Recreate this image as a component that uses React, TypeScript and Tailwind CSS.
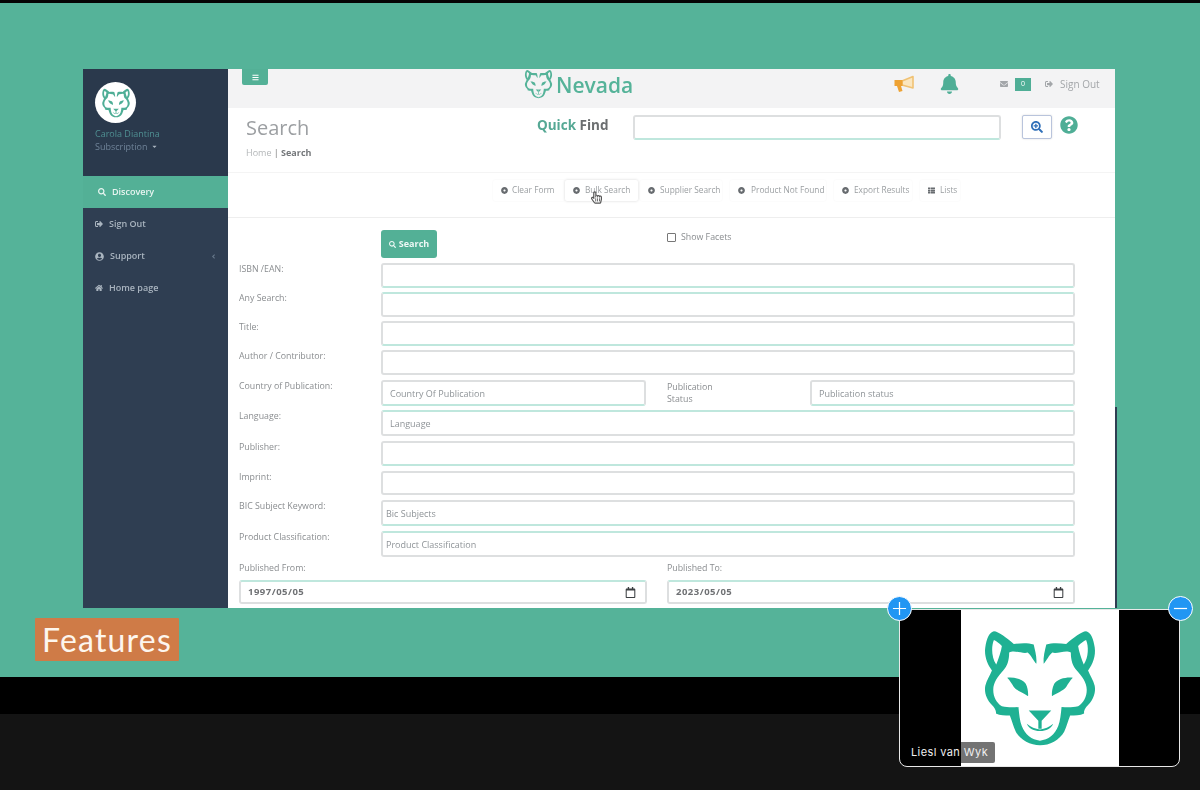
import React from "react";
import { FaBars, FaSearch, FaSignOutAlt, FaUserCircle, FaHome, FaEnvelope, FaBell, FaQuestionCircle, FaSearchPlus, FaThList, FaDotCircle, FaRegHandPointer, FaRegCalendar, FaCaretDown, FaAngleLeft } from "react-icons/fa";

function Wolf({ className }: { className: string }) {
  const half = (
    <>
      <path d="M338 122 C352 122 375 142 398 160 C418 158 440 156 458 162 C462 180 468 200 466 220 C458 212 450 194 440 186 C425 192 400 176 384 186 C384 210 378 228 366 240 C350 258 336 276 336 298 C336 320 346 338 362 348 C380 352 395 352 412 350 C414 372 416 392 422 408 C432 434 452 450 477 452 L477 466 C448 466 418 450 404 425 C396 408 392 390 386 376 C372 376 356 376 344 370 C346 362 340 352 332 344 C316 328 308 306 312 286 C316 270 326 256 332 240 C318 222 308 196 312 170 C316 146 322 126 338 122 Z M338 148 C330 166 330 200 345 222 C352 204 360 182 362 166 C354 158 346 152 338 148 Z" fillRule="evenodd" />
      <path d="M378 262 C400 260 424 266 434 280 C440 292 442 306 441 318 C426 308 408 302 398 290 C392 280 386 270 378 262 Z" />
      <path d="M443 361 L477 361 L477 416 L472 416 L472 392 Z" />
      <path d="M437 401 C450 412 462 416 477 418 L477 423 C458 423 444 416 437 401 Z" />
    </>
  );
  return (
    <svg viewBox="300 112 354 362" className={className} fill="currentColor">
      {half}
      <g transform="translate(954 0) scale(-1 1)">{half}</g>
    </svg>
  );
}

const GT = "border-[#dddfe0] border-b-[#bfe7dd]";
const TG = "border-[#dddfe0] border-t-[#bfe7dd]";
const GG = "border-[#dddfe0]";
const LABEL = "text-[8.8px] text-[#8a8d90]";

function Field({ tone, h, ph, pad }: { tone: string; h: string; ph?: string; pad?: string }) {
  return (
    <input
      readOnly
      placeholder={ph}
      className={`min-w-0 flex-1 ${h} rounded-[3px] border-2 bg-white ${tone} ${pad ?? "px-[7px]"} text-[9px] placeholder:text-[#8f9498] outline-none`}
    />
  );
}

function Row({ label, tone, h, ph, pad, mt }: { label: string; tone: string; h: string; ph?: string; pad?: string; mt: string }) {
  return (
    <div className={`flex ${mt}`}>
      <div className={`w-[142px] shrink-0 leading-[12px] ${LABEL}`}>{label}</div>
      <Field tone={tone} h={h} ph={ph} pad={pad} />
    </div>
  );
}

function Tool({ label, active, w, gap, icon }: { label: string; active?: boolean; w: string; gap: string; icon?: React.ReactNode }) {
  return (
    <div className={`flex h-[21px] ${w} ${gap} items-center whitespace-nowrap rounded-[2px] pb-[1px] pl-[8px] text-[8.3px] text-[#9a9ea1] ${active ? "bg-white shadow-[0_0_3px_rgba(0,0,0,0.16)]" : "shadow-[0_0_2px_rgba(0,0,0,0.05)]"}`}>
      {icon ?? <FaDotCircle className="h-[7px] w-[7px] shrink-0 text-[#686c70]" />}
      <span>{label}</span>
    </div>
  );
}

function Nav({ icon, label, extra }: { icon: React.ReactNode; label: string; extra?: React.ReactNode }) {
  return (
    <div className="flex h-[32px] items-center gap-[6px] pl-[12px] pr-[11px] text-[9px] font-semibold text-[#a9b4bf]">
      {icon}
      <span>{label}</span>
      {extra}
    </div>
  );
}

function DateBox({ label, value, tone }: { label: string; value: string; tone: string }) {
  return (
    <div className="flex w-[408px] flex-col">
      <div className={`h-[23px] pt-[5px] leading-[12px] ${LABEL}`}>{label}</div>
      <div className={`flex h-[24px] items-center justify-between rounded-[3px] border-2 bg-white pl-[7px] pr-[9px] ${tone}`}>
        <span className="text-[9.5px] font-bold tracking-[0.5px] text-[#6f7174]">{value}</span>
        <FaRegCalendar className="h-[11px] w-[11px] text-[#3c3f42]" />
      </div>
    </div>
  );
}

export default function App() {
  return (
    <div className="relative flex h-[790px] w-[1200px] flex-col overflow-hidden bg-[#141414] font-['Open_Sans',sans-serif]">
      <div className="h-[3px] bg-[#050505]" />
      <div className="flex h-[674px] flex-col bg-[#55b399] pl-[83px] pt-[66px]">
        <div className="flex h-[539px] items-end">
          <div className="flex h-[539px] w-[1032px] overflow-hidden bg-white blur-[0.4px]">
            <aside className="flex w-[145px] shrink-0 flex-col bg-[#2f3e52]">
              <div className="h-[107px] bg-[#2a394c] pl-[12px] pt-[13px]">
                <div className="flex h-[41px] w-[41px] items-center justify-center rounded-full bg-white">
                  <Wolf className="h-[30px] w-[30px] text-[#4fae96]" />
                </div>
                <div className="mt-[5px] text-[9px] leading-[12px] text-[#4f8f92]">Carola Diantina</div>
                <div className="flex items-center gap-[4px] text-[9px] leading-[13px] text-[#6f8398]">
                  Subscription <FaCaretDown className="h-[7px] w-[7px] text-[#a9b4bf]" />
                </div>
              </div>
              <div className="flex h-[32px] items-center gap-[6px] bg-[#53b096] pl-[15px] text-[9px] font-semibold text-[#e8f5f1]">
                <FaSearch className="h-[8px] w-[8px]" />
                <span>Discovery</span>
              </div>
              <Nav icon={<FaSignOutAlt className="h-[8px] w-[8px]" />} label="Sign Out" />
              <Nav icon={<FaUserCircle className="h-[9px] w-[9px]" />} label="Support" extra={<FaAngleLeft className="ml-auto h-[7px] w-[7px] text-[#66778a]" />} />
              <Nav icon={<FaHome className="h-[8px] w-[8px]" />} label="Home page" />
            </aside>

            <main className="flex min-w-0 flex-1 flex-col">
              <header className="flex h-[39px] shrink-0 items-start bg-[#f3f3f4]">
                <div className="ml-[14px] flex h-[16px] w-[26px] items-center justify-center rounded-b-[2px] bg-[#53b096] text-white">
                  <FaBars className="h-[7px] w-[7px]" />
                </div>
                <Wolf className="ml-[256px] h-[30px] w-[29px] text-[#55b399]" />
                <span className="ml-[3px] mt-[1px] w-[77px] whitespace-nowrap text-[21px] font-semibold leading-[30px] text-[#55b399]">Nevada</span>
                <svg viewBox="0 0 20 18" className="ml-[261px] mt-[6px] h-[18px] w-[20px]">
                  <path d="M8 6 L19 1.5 V13 L8 10 Z" fill="#fbe6bf" stroke="#f0c274" strokeWidth="1.6" strokeLinejoin="round" />
                  <path d="M0.5 5 H8.5 V11 H7 L8.5 16 L5 17 L3 11 H0.5 Z" fill="#eea233" />
                </svg>
                <FaBell className="ml-[26px] mt-[5px] h-[20px] w-[19px] text-[#4fae96]" />
                <FaEnvelope className="ml-[40px] mt-[11px] h-[8px] w-[10px] text-[#a3a6a9]" />
                <div className="ml-[6px] mt-[9px] flex h-[13px] w-[16px] items-center justify-center bg-[#4fae96] text-[7px] text-white">0</div>
                <FaSignOutAlt className="ml-[14px] mt-[11px] h-[8px] w-[8px] text-[#a3a6a9]" />
                <span className="ml-[7px] mt-[9px] whitespace-nowrap text-[10px] leading-[13px] text-[#a3a6a9]">Sign Out</span>
              </header>

              <section className="flex h-[65px] shrink-0 items-start border-b border-[#f4f4f4]">
                <div className="w-[309px] pl-[18px] pt-[6px]">
                  <div className="text-[20px] leading-[28px] text-[#9c9fa2]">Search</div>
                  <div className="mt-[5px] text-[9px] leading-[12px] text-[#b3b6b8]">
                    Home <span className="text-[#777]">|</span> <b className="text-[#74777a]">Search</b>
                  </div>
                </div>
                <div className="mt-[8px] w-[72px] whitespace-nowrap text-[13.5px] font-bold leading-[18px] text-[#55a894]">
                  Quick <span className="text-[#6b6e70]">Find</span>
                </div>
                <input readOnly className="ml-[24px] mt-[7px] h-[25px] w-[368px] rounded-[3px] border-2 border-[#dddfe0] border-b-[#bfe7dd] bg-white outline-none" />
                <div className="ml-[21px] mt-[7px] flex h-[24px] w-[30px] items-center justify-center rounded-[2px] border border-[#b9c4dc] bg-white shadow-[0_0_2px_rgba(0,0,0,0.15)]">
                  <FaSearchPlus className="h-[12px] w-[12px] text-[#2f6fb8]" />
                </div>
                <FaQuestionCircle className="ml-[8px] mt-[8px] h-[18px] w-[18px] text-[#4fae96]" />
              </section>

              <section className="flex h-[45px] shrink-0 items-start border-b border-[#eeeeee] pl-[265px] pt-[7px]">
                <Tool label="Clear Form" w="w-[72px]" gap="gap-[4px]" />
                <Tool label="Bulk Search" w="w-[73px]" gap="gap-[5px]" active />
                <div className="w-[2px] shrink-0" />
                <Tool label="Supplier Search" w="w-[82px]" gap="gap-[5px]" />
                <div className="w-[8px] shrink-0" />
                <Tool label="Product Not Found" w="w-[96px]" gap="gap-[6px]" />
                <div className="w-[8px] shrink-0" />
                <Tool label="Export Results" w="w-[78px]" gap="gap-[5px]" />
                <div className="w-[8px] shrink-0" />
                <Tool label="Lists" w="w-[40px]" gap="gap-[5px]" icon={<FaThList className="h-[7px] w-[7px] shrink-0 text-[#686c70]" />} />
              </section>

              <section className="flex flex-col pl-[11px] pr-[40px] pt-[12px]">
                <div className="flex h-[28px] items-start pl-[142px]">
                  <div className="flex h-[28px] w-[56px] items-center justify-center gap-[3px] rounded-[3px] bg-[#53b096] text-[9px] font-bold text-[#eef8f5]">
                    <FaSearch className="h-[7px] w-[7px]" /> Search
                  </div>
                  <div className={`ml-[230px] mt-[2px] flex items-center gap-[5px] leading-[10px] ${LABEL}`}>
                    <span className="h-[9px] w-[9px] rounded-[1px] border border-[#777] bg-white" />
                    Show Facets
                  </div>
                </div>
                <Row mt="mt-[5px]" label="ISBN /EAN:" tone={GT} h="h-[25px]" />
                <Row mt="mt-[4px]" label="Any Search:" tone={TG} h="h-[25px]" />
                <Row mt="mt-[4px]" label="Title:" tone={GT} h="h-[25px]" />
                <Row mt="mt-[4px]" label="Author / Contributor:" tone={GG} h="h-[25px]" />
                <div className="mt-[5px] flex">
                  <div className={`w-[142px] shrink-0 leading-[12px] ${LABEL}`}>Country of Publication:</div>
                  <Field tone={GT} h="h-[26px]" ph="Country Of Publication" />
                  <div className={`ml-[21px] w-[143px] shrink-0 pt-[1px] leading-[12px] ${LABEL}`}>Publication<br />Status</div>
                  <Field tone={GT} h="h-[26px]" ph="Publication status" />
                </div>
                <Row mt="mt-[4px]" label="Language:" tone={TG} h="h-[26px]" ph="Language" />
                <Row mt="mt-[5px]" label="Publisher:" tone={GT} h="h-[25px]" />
                <Row mt="mt-[5px]" label="Imprint:" tone={GG} h="h-[24px]" />
                <Row mt="mt-[5px]" label="BIC Subject Keyword:" tone={GT} h="h-[26px]" ph="Bic Subjects" pad="px-[3px]" />
                <Row mt="mt-[5px]" label="Product Classification:" tone={TG} h="h-[26px]" ph="Product Classification" pad="px-[3px]" />
                <div className="flex justify-between">
                  <DateBox label="Published From:" value="1997/05/05" tone={TG} />
                  <DateBox label="Published To:" value="2023/05/05" tone={TG} />
                </div>
              </section>
            </main>
          </div>
          <div className="h-[201px] w-[2px] bg-[#2f3e52]" />
        </div>
        <div className="ml-[-48px] mt-[10px] flex h-[43px] w-[144px] items-center justify-center rounded-[1px] bg-[#cf7b47] font-['Lato',sans-serif] text-[32px] leading-none tracking-[1.2px] text-[#fdf6ee]">
          Features
        </div>
      </div>
      <div className="h-[37px] bg-black" />
      <div className="flex-1 bg-[#141414]" />

      <FaRegHandPointer className="absolute left-[591px] top-[191px] h-[13px] w-[11px] text-[#555]" />

      <div className="absolute left-[899px] top-[609px] flex h-[158px] w-[281px] justify-center overflow-hidden rounded-[8px] border border-[#e8e8e8] bg-black">
        <div className="flex h-full w-[158px] items-center justify-center bg-white">
          <Wolf className="h-[120px] w-[118px] text-[#1fb193]" />
        </div>
        <div className="absolute bottom-[3px] left-[4px] flex h-[21px] items-center rounded-[2px] bg-black/55 pl-[7px] pr-[7px] font-['Inter',sans-serif] text-[11px] tracking-[0.4px] text-[#f0f0f0]">
          Liesl van Wyk
        </div>
      </div>
      <div className="absolute left-[887px] top-[596px] flex h-[25px] w-[25px] items-center justify-center rounded-full border-[1.5px] border-white bg-[#2196f3]">
        <svg viewBox="0 0 16 16" className="h-[15px] w-[15px]" stroke="white" strokeWidth="1.3"><path d="M8 1v14M1 8h14" /></svg>
      </div>
      <div className="absolute left-[1168px] top-[596px] flex h-[25px] w-[25px] items-center justify-center rounded-full border-[1.5px] border-white bg-[#2196f3]">
        <svg viewBox="0 0 16 16" className="h-[15px] w-[15px]" stroke="white" strokeWidth="1.3"><path d="M1 8h14" /></svg>
      </div>
    </div>
  );
}
